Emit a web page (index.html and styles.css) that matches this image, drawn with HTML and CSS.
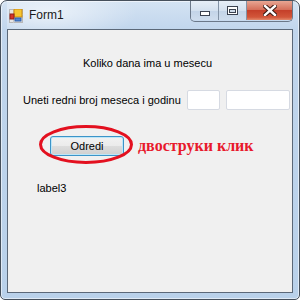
FILE: index.html
```html
<!DOCTYPE html>
<html lang="sr">
<head>
    <meta charset="UTF-8">
    <title>Form1</title>
    <link rel="stylesheet" href="styles.css">
</head>
<body>
    <div class="window">
        <div class="titlebar">
            <div class="title">
                <svg class="app-icon" width="14" height="14" viewBox="0 0 14 14">
                    <rect x="0.5" y="0.5" width="13" height="13" fill="#e6e6e6" stroke="#b8b8b8"/>
                    <line x1="0" y1="5.5" x2="14" y2="5.5" stroke="#c8c8c8"/>
                    <line x1="4.5" y1="0" x2="4.5" y2="14" stroke="#c8c8c8"/>
                    <rect x="5" y="0" width="8" height="8" fill="#f6c531" stroke="#c98a12"/>
                    <rect x="1" y="5" width="4" height="5" fill="#d5352a" stroke="#8f1f18"/>
                    <rect x="6" y="9" width="6" height="3" fill="#4f86d6" stroke="#2e5ea8"/>
                </svg>
                <span>Form1</span>
            </div>
            <div class="caption-buttons">
                <div class="cbtn min">
                    <svg width="10" height="5" viewBox="0 0 10 5"><rect x="0.5" y="0.5" width="9" height="4" fill="#fff" stroke="#3b4250"/></svg>
                </div>
                <div class="cbtn max">
                    <svg width="11" height="9" viewBox="0 0 11 9"><rect x="0.5" y="0.5" width="10" height="8" fill="#fff" stroke="#3b4250"/><rect x="2.5" y="3.5" width="6" height="3" fill="#cfdbe9" stroke="#3b4250"/></svg>
                </div>
                <div class="cbtn close">
                    <svg width="14" height="11" viewBox="0 0 14 11"><path d="M2 1 L12 10 M12 1 L2 10" stroke="#3a1a14" stroke-width="4.5" stroke-linecap="square"/><path d="M2 1 L12 10 M12 1 L2 10" stroke="#fff" stroke-width="2.4" stroke-linecap="square"/></svg>
                </div>
            </div>
        </div>
        <div class="client">
            <div class="heading">Koliko dana ima u mesecu</div>
            <div class="input-row">
                <label>Uneti redni broj meseca i godinu</label>
                <input type="text" class="tb-month">
                <input type="text" class="tb-year">
            </div>
            <div class="button-row">
                <div class="btn-wrap">
                    <button>Odredi</button>
                    <svg class="ring" width="94" height="39" viewBox="0 0 94 39"><ellipse cx="47" cy="19.5" rx="45.5" ry="18" fill="none" stroke="#e3101f" stroke-width="3"/></svg>
                </div>
                <span class="note">двоструки клик</span>
            </div>
            <div class="result">label3</div>
        </div>
    </div>
</body>
</html>
```

FILE: styles.css
```css
body {
    margin: 0;
    background: #fff;
    font-family: "Liberation Sans", Arial, sans-serif;
}
.window {
    width: 300px;
    height: 300px;
    box-sizing: border-box;
    border: 1px solid #46505c;
    border-radius: 7px 7px 5px 5px;
    padding: 0 6px 6px 6px;
    background: linear-gradient(to bottom, #d4e3f3, #c0d5ec 30px, #b9d1ea);
    box-shadow: inset 0 0 0 1px rgba(255,255,255,0.55);
    display: flex;
    flex-direction: column;
}
.titlebar {
    height: 28px;
    display: flex;
    align-items: flex-start;
    background: radial-gradient(ellipse 90px 30px at 40px 12px, rgba(255,255,255,0.6), rgba(255,255,255,0));
}
.title {
    display: flex;
    align-items: center;
    height: 28px;
    margin-left: 2px;
    font-size: 12px;
    color: #1a1a1a;
}
.app-icon {
    margin-right: 6px;
    margin-top: 1px;
}
.caption-buttons {
    margin-left: auto;
    display: flex;
    height: 20px;
    border: 1px solid #6b7889;
    border-top: none;
    border-radius: 0 0 5px 5px;
    overflow: hidden;
}
.cbtn {
    height: 19px;
    display: flex;
    align-items: center;
    justify-content: center;
    box-sizing: border-box;
}
.min, .max {
    width: 28px;
    background: linear-gradient(to bottom, #e6eef7, #d4e1ef 50%, #c3d4e8 51%, #cfdded);
    border-right: 1px solid #8393a6;
}
.min svg {
    margin-top: 6px;
}
.close {
    width: 45px;
    background: linear-gradient(to bottom, #e8a693, #d5705b 45%, #c5402a 50%, #d2563a 85%, #e2896c);
}
.client {
    flex: 1;
    background: #f0f0f0;
    border: 1px solid #5b6878;
    font-size: 11px;
    color: #000;
}
.heading {
    padding: 27px 0 0 75px;
    line-height: 13px;
}
.input-row {
    display: flex;
    align-items: center;
    margin-top: 20px;
    padding-left: 15px;
}
.input-row label {
    width: 164px;
}
input {
    height: 20px;
    box-sizing: border-box;
    border: 1px solid #d6dae2;
    border-radius: 2px;
    background: #fff;
    padding: 0;
}
.tb-month {
    width: 33px;
    margin-right: 6px;
}
.tb-year {
    width: 64px;
}
.button-row {
    display: flex;
    align-items: center;
    margin-top: 26px;
    padding-left: 42px;
}
.btn-wrap {
    position: relative;
    width: 74px;
    height: 20px;
}
button {
    width: 74px;
    height: 20px;
    font-family: "Liberation Sans", Arial, sans-serif;
    font-size: 11px;
    color: #000;
    border: 1px solid #3c94c8;
    border-radius: 3px;
    background: linear-gradient(to bottom, #f2f2f2, #ebebeb 50%, #dddddd 51%, #cfcfcf);
    box-shadow: inset 0 0 0 1px #bde6f8;
    padding: 0;
}
.ring {
    position: absolute;
    left: -11px;
    top: -11px;
}
.note {
    margin-left: 14px;
    font-family: "Liberation Serif", "Times New Roman", serif;
    font-weight: bold;
    font-size: 16px;
    color: #e8192c;
}
.result {
    margin-top: 26px;
    padding-left: 29px;
    line-height: 13px;
}
```
